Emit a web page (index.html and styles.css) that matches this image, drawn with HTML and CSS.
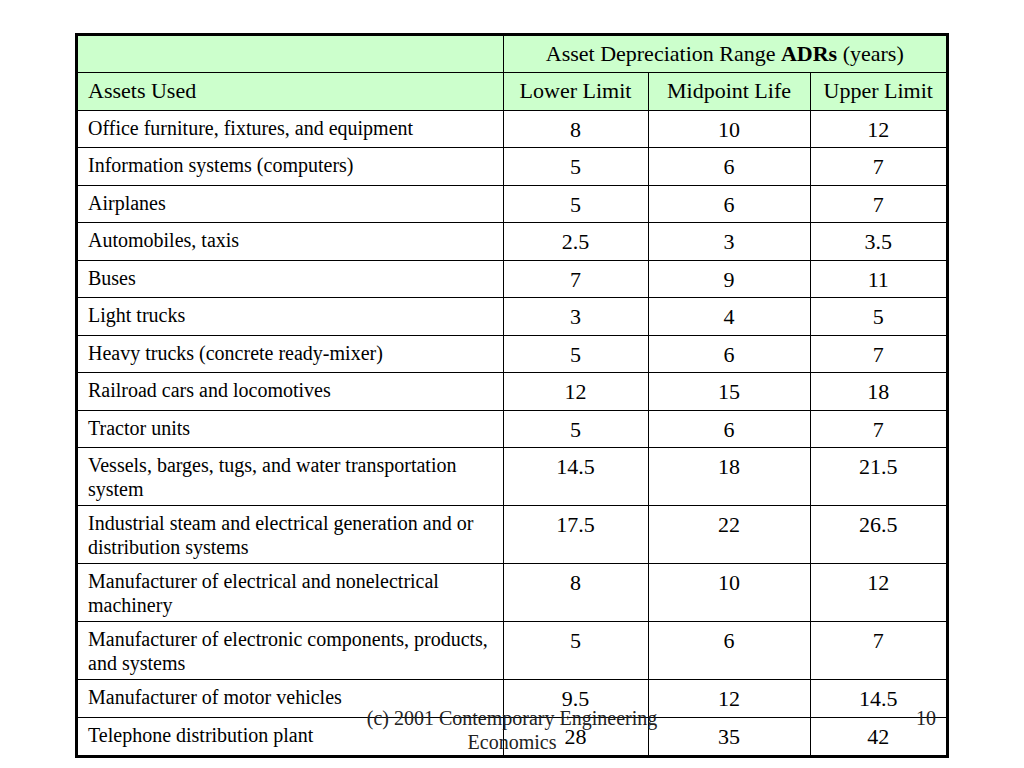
FILE: index.html
```html
<!DOCTYPE html>
<html>
<head>
<meta charset="utf-8">
<link rel="stylesheet" href="styles.css">
</head>
<body>
<div class="slide">
  <div class="frame">
    <table class="adr">
      <colgroup>
        <col class="c-asset">
        <col class="c-low">
        <col class="c-mid">
        <col class="c-up">
      </colgroup>
      <tr class="head head1">
        <th class="blank"></th>
        <th colspan="3" class="range">Asset Depreciation Range <b>ADRs</b> (years)</th>
      </tr>
      <tr class="head head2">
        <th class="name">Assets Used</th>
        <th>Lower Limit</th>
        <th>Midpoint Life</th>
        <th>Upper Limit</th>
      </tr>
      <tr class="r1"><td class="name">Office furniture, fixtures, and equipment</td><td>8</td><td>10</td><td>12</td></tr>
      <tr class="r1"><td class="name">Information systems (computers)</td><td>5</td><td>6</td><td>7</td></tr>
      <tr class="r1"><td class="name">Airplanes</td><td>5</td><td>6</td><td>7</td></tr>
      <tr class="r1"><td class="name">Automobiles, taxis</td><td>2.5</td><td>3</td><td>3.5</td></tr>
      <tr class="r1"><td class="name">Buses</td><td>7</td><td>9</td><td>11</td></tr>
      <tr class="r1"><td class="name">Light trucks</td><td>3</td><td>4</td><td>5</td></tr>
      <tr class="r1"><td class="name">Heavy trucks (concrete ready-mixer)</td><td>5</td><td>6</td><td>7</td></tr>
      <tr class="r1"><td class="name">Railroad cars and locomotives</td><td>12</td><td>15</td><td>18</td></tr>
      <tr class="r1"><td class="name">Tractor units</td><td>5</td><td>6</td><td>7</td></tr>
      <tr class="r2"><td class="name">Vessels, barges, tugs, and water transportation system</td><td>14.5</td><td>18</td><td>21.5</td></tr>
      <tr class="r2"><td class="name">Industrial steam and electrical generation and or distribution systems</td><td>17.5</td><td>22</td><td>26.5</td></tr>
      <tr class="r2"><td class="name">Manufacturer of electrical and nonelectrical machinery</td><td>8</td><td>10</td><td>12</td></tr>
      <tr class="r2"><td class="name">Manufacturer of electronic components, products, and systems</td><td>5</td><td>6</td><td>7</td></tr>
      <tr class="r1"><td class="name">Manufacturer of motor vehicles</td><td>9.5</td><td>12</td><td>14.5</td></tr>
      <tr class="r1"><td class="name">Telephone distribution plant</td><td>28</td><td>35</td><td>42</td></tr>
    </table>
  </div>
  <div class="footer">(c) 2001 Contemporary Engineering Economics</div>
  <div class="pageno">10</div>
</div>
</body>
</html>
```

FILE: styles.css
```css
html, body {
  margin: 0;
  padding: 0;
  background: #ffffff;
}

.slide {
  position: relative;
  width: 1024px;
  height: 768px;
  overflow: hidden;
  font-family: "Liberation Serif", "Times New Roman", serif;
  color: #000;
}

.frame {
  position: absolute;
  left: 75px;
  top: 33px;
  width: 868px;
  border: 3px solid #000;
}

.adr {
  width: 868px;
  border-collapse: collapse;
  border-style: hidden;
  table-layout: fixed;
}

.c-asset { width: 425px; }
.c-low { width: 145px; }
.c-mid { width: 162px; }
.c-up { width: 136px; }

.adr th,
.adr td {
  border: 1px solid #000;
  padding: 0;
  text-align: center;
  vertical-align: top;
}

.head th {
  background: #ccffcc;
  font-weight: normal;
  font-size: 22px;
  line-height: 26px;
  padding-top: 5px;
}

.head th.name {
  text-align: left;
  padding-left: 10px;
}

.head th b {
  font-weight: bold;
}

.head1 { height: 36.5px; }
.head2 { height: 37.5px; }

.r1 { height: 37.5px; }
.r2 { height: 58px; }

.adr td {
  font-size: 22px;
  line-height: 26px;
  padding-top: 6px;
}

.adr td.name {
  text-align: left;
  font-size: 20px;
  line-height: 24px;
  padding: 5px 10px 0 10px;
}

.footer {
  position: absolute;
  left: 352px;
  top: 706px;
  width: 320px;
  text-align: center;
  font-size: 20px;
  line-height: 24px;
  color: #222;
}

.pageno {
  position: absolute;
  left: 900px;
  top: 706px;
  width: 36px;
  text-align: right;
  font-size: 20px;
  line-height: 24px;
  color: #222;
}
```
